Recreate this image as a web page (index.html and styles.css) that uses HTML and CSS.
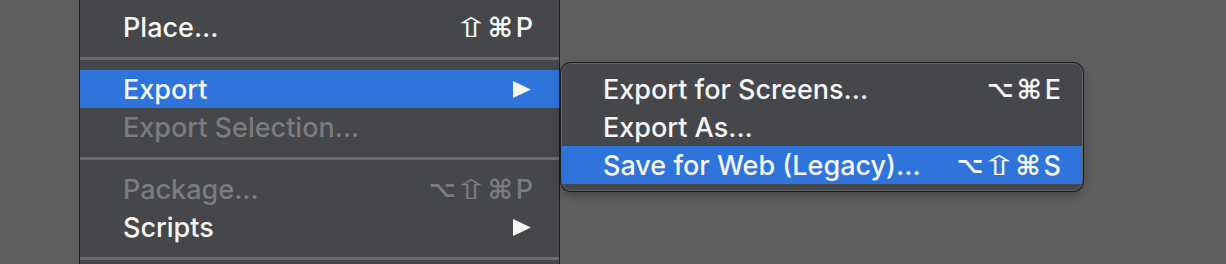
FILE: index.html
```html
<!DOCTYPE html>
<html>
<head>
    <meta charset="utf-8">
    <link rel="stylesheet" href="styles.css">
    <title>File menu - Export</title>
</head>
<body>

<div class="desk">

<div class="menu">
    <div class="item">
        <span class="label">Place...</span>
        <span class="keys"><span class="mod"><span class="shift">&#8679;</span></span><span class="mod">&#8984;</span><span class="key">P</span></span>
    </div>
    <div class="sep"></div>
    <div class="item active">
        <span class="label">Export</span>
        <svg class="arrow" width="18" height="17" viewBox="0 0 18 17"><polygon points="0,0 18,8.5 0,17"/></svg>
    </div>
    <div class="item off">
        <span class="label">Export Selection...</span>
    </div>
    <div class="sep"></div>
    <div class="item off">
        <span class="label">Package...</span>
        <span class="keys"><span class="mod opt">&#8997;</span><span class="mod"><span class="shift">&#8679;</span></span><span class="mod">&#8984;</span><span class="key">P</span></span>
    </div>
    <div class="item">
        <span class="label">Scripts</span>
        <svg class="arrow" width="18" height="17" viewBox="0 0 18 17"><polygon points="0,0 18,8.5 0,17"/></svg>
    </div>
    <div class="sep"></div>
</div>

<div class="submenu">
    <div class="item">
        <span class="label">Export for Screens...</span>
        <span class="keys"><span class="mod opt">&#8997;</span><span class="mod">&#8984;</span><span class="key">E</span></span>
    </div>
    <div class="item">
        <span class="label">Export As...</span>
    </div>
    <div class="item active">
        <span class="label">Save for Web (Legacy)...</span>
        <span class="keys"><span class="mod opt">&#8997;</span><span class="mod"><span class="shift">&#8679;</span></span><span class="mod">&#8984;</span><span class="key">S</span></span>
    </div>
</div>

</div>

</body>
</html>
```

FILE: styles.css
```css
body {margin: 0; background: #5e5e5e; overflow: hidden;}
body {font-family: Inter, "Liberation Sans", sans-serif; font-size: 27px; font-weight: 500; color: #f6f6f6;}

.desk {display: flex; align-items: flex-start; height: 264px;}

.menu {margin-left: 79px; width: 479px; padding-top: 8px; background: #46474a;
       border-left: 1px solid #1c1c1d; border-right: 1px solid #1c1c1d;}

.submenu {margin-top: 63px; margin-left: 1px; width: 520px; padding: 6px 0;
          background: #46474a; border: 1px solid #636467; border-radius: 10px;
          box-shadow: 0 0 0 1px #1f1f20, 0 4px 10px rgba(0, 0, 0, 0.25);}

.item {display: flex; align-items: center; height: 38px; padding: 0 26px 0 43px;}
.submenu .item {padding: 0 21px 0 41px;}
.item .label {flex: 1; white-space: nowrap;}
.item.active {background: #2f74db;}
.item.off {color: #7b7c7f;}

.sep {height: 3px; margin: 11px 0 10px 0; background: #6b6c6f;}

.keys {display: flex; align-items: center;}
.mod {display: inline-block; width: 29px; text-align: center;
      font-family: "DejaVu Sans", sans-serif; font-size: 27px; font-weight: bold;}
.mod.opt {font-size: 23px;}
.shift {display: inline-block; transform: scaleX(1.6); font-weight: normal;}
.key {margin-left: 1px;}

.arrow {fill: #f6f6f6; margin-right: 2px;}
```
